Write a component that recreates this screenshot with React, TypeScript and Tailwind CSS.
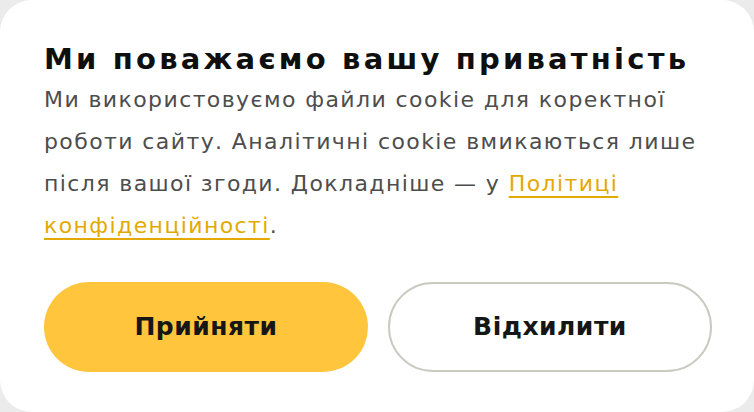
export default function App() {
  return (
    <div className="h-[412px] w-[754px] bg-[#ebebeb]">
      <div className="flex h-full w-full flex-col rounded-[32px] bg-white pl-[44px] pr-[42px] pt-[41px] [font-family:'DejaVu_Sans',sans-serif]">
        <h2 className="whitespace-nowrap text-[29px] font-bold leading-[36px] tracking-[3.2px] text-[#0f0f0f]">
          Ми поважаємо вашу приватність
        </h2>
        <p className="mt-[2px] whitespace-nowrap text-[22px] leading-[42px] tracking-[1.4px] text-[#4d4d4d]">
          Ми використовуємо файли cookie для коректної
          <br />
          роботи сайту. Аналітичні cookie вмикаються лише
          <br />
          після вашої згоди. Докладніше — у{' '}
          <a href="#" className="text-[#e3a900] underline decoration-[1.5px] underline-offset-[5px]">
            Політиці
            <br />
            конфіденційності
          </a>
          .
        </p>
        <div className="mt-[35px] grid grid-cols-2 gap-[20px]">
          <button className="h-[90px] rounded-full bg-[#ffc63d] text-[25px] font-bold tracking-[0.5px] text-[#161616]">
            Прийняти
          </button>
          <button className="h-[90px] rounded-full border-2 border-[#cbcac2] bg-white text-[25px] font-bold tracking-[0.5px] text-[#161616]">
            Відхилити
          </button>
        </div>
      </div>
    </div>
  )
}
